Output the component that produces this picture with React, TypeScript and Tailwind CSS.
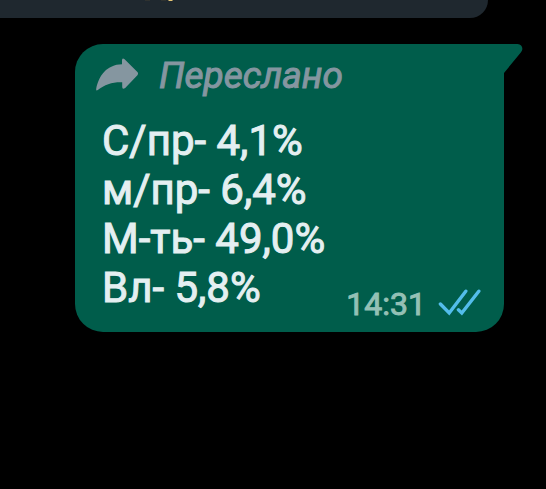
const lines = ["С/пр- 4,1%", "м/пр- 6,4%", "М-ть- 49,0%", "Вл- 5,8%"];

function ForwardIcon() {
  return (
    <svg viewBox="0 0 44 36" className="h-9 w-11 shrink-0" fill="#8596a0" aria-hidden="true">
      <path d="M27 2.4Q27 -.6 29.6 1.2L42.4 14Q43.8 15.6 42.4 17.2L30.2 30Q27.2 32 27.2 28.8V24.2C18 23.8 9.6 26.4 2.8 32Q.9 33.2 1.2 30.8C3.8 17.4 11.8 6.6 27 6.2Z" />
    </svg>
  );
}

function ReadIcon() {
  return (
    <svg
      viewBox="0 0 44 30"
      className="h-[30px] w-11 shrink-0"
      fill="none"
      stroke="#53bdeb"
      strokeWidth="3.4"
      strokeLinecap="round"
      aria-hidden="true"
    >
      <path d="M2.4 15L11.2 24L27.8 2.2M20.4 20.8L23.8 24L40.8 2.2" />
    </svg>
  );
}

function BubbleTail() {
  return (
    <svg viewBox="0 0 20 30" className="absolute top-0 left-full -ml-px h-[30px] w-5" fill="#005d4b" aria-hidden="true">
      <path d="M0 0H14.6Q19.2 .4 19.4 5Q19.2 6.8 17.8 8.4L1 29H0Z" />
    </svg>
  );
}

export default function App() {
  return (
    <main className="min-h-screen overflow-hidden bg-black font-['Roboto',sans-serif]">
      <section className="relative mr-[58px] h-[18px] rounded-br-[20px] bg-[#1f282f]">
        <svg viewBox="0 0 30 2" className="absolute top-0 left-[145px] h-0.5 w-[30px]" aria-hidden="true">
          <path d="M0 0H5V1H0ZM16 0H21V1H16Z" fill="#2f3230" />
          <path d="M23 0H28L27 1H24Z" fill="#e8c775" />
        </svg>
      </section>

      <article className="relative mt-[26px] mr-[42px] ml-[75px] rounded-[28px] rounded-tr-none bg-[#005d4b] pt-2.5 pr-[22px] pb-2 pl-[27px]">
        <BubbleTail />

        <header className="-ml-[7px] flex items-center gap-5">
          <ForwardIcon />
          <p className="text-[37px] leading-[44px] text-[#8596a0] italic [-webkit-text-stroke:1px]">Переслано</p>
        </header>

        <div className="mt-[18px] flex items-end justify-between">
          <div className="pb-3 text-[42px] leading-[49px] whitespace-nowrap text-[#e4eff1] [-webkit-text-stroke:1px]">
            {lines.map((line) => (
              <p key={line}>{line}</p>
            ))}
          </div>
          <div className="flex shrink-0 items-center gap-3">
            <time dateTime="14:31" className="text-[32px] leading-10 text-[#94c0b5] [-webkit-text-stroke:1px]">
              14:31
            </time>
            <ReadIcon />
          </div>
        </div>
      </article>
    </main>
  );
}
